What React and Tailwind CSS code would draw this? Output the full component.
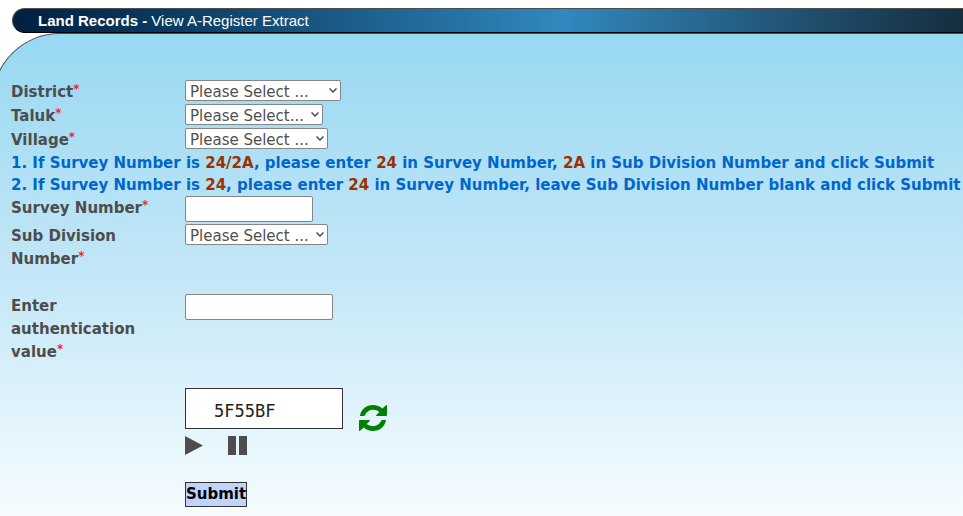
import React from 'react';

const controlClass = 'border border-[#858585] rounded-xs bg-white text-[#505050]';

const Required = () => <span className="text-[#ff1f1f] text-xs leading-4 align-top">*</span>;

const FormRow = ({ id, label, className = '', children }) => (
  <div className={`flex items-start ${className}`}>
    <label htmlFor={id} className="w-36 mr-[30px] pt-px shrink-0 font-bold leading-[23px]">
      {label}
      <Required />
    </label>
    {children}
  </div>
);

const SelectField = ({ id, placeholder, width }) => (
  <div className={`relative ${width}`}>
    <select
      id={id}
      name={id}
      defaultValue=""
      className={`${controlClass} block w-full h-[21px] leading-[19px] pt-0.5 pl-1 pr-4 appearance-none`}
    >
      <option value="">{placeholder}</option>
    </select>
    <svg
      viewBox="0 0 8 5"
      fill="none"
      stroke="currentColor"
      strokeWidth="1.5"
      className="absolute right-1 top-2 w-2 h-[5px] pointer-events-none"
      aria-hidden="true"
    >
      <path d="M.5.5 4 4 7.500.5" />
    </svg>
  </div>
);

const Mark = ({ children }) => <span className="text-[#993300]">{children}</span>;

const RefreshIcon = () => (
  <svg viewBox="0 0 28 28" fill="currentColor" className="w-7 h-7" aria-hidden="true">
    <path d="M1 11.500C2.500 4.800 7.500 1 14 1c3.600 0 6.800 1.300 9.300 3.500L27 1.200q1-.6 1 .6V11q0 1-1 1H17.800q-1.200 0-.5-1l3-3C18.500 6.600 16.500 5.800 14 5.800c-3.600 0-6.500 2-8 5.200q-.3 1-1 1H1.500q-.6 0-.5-.5z" />
    <path d="M27 16.500C25.500 23.200 20.500 27 14 27c-3.600 0-6.800-1.300-9.300-3.500L1 26.800q-1 .6-1-.6V17q0-1 1-1h9.200q1.200 0 .5 1l-3 3c1.800 1.400 3.800 2.200 6.300 2.200 3.600 0 6.500-2 8-5.200q.3-1 1-1h3.500q.6 0 .5.5z" />
  </svg>
);

const PlayIcon = () => (
  <svg viewBox="0 0 18 20" fill="currentColor" className="w-[18px] h-5" aria-hidden="true">
    <path d="M0 0 18 9.500 0 19z" />
  </svg>
);

const PauseIcon = () => (
  <svg viewBox="0 0 20 20" fill="currentColor" className="w-5 h-5" aria-hidden="true">
    <path d="M1 0h8v19H1zM12 0h8v19h-8z" />
  </svg>
);

const App = () => {
  return (
    <div className="min-h-screen overflow-hidden bg-white pt-2 flex flex-col">
      <header className="ml-3 h-[25px] pt-px flex items-center rounded-l-full border border-r-0 border-[#4d4d4d] border-b-black bg-linear-to-r from-[#021f3f] via-[#3089c0] via-58% to-[#152e40] pl-[25px] font-['Liberation_Sans',Arial,sans-serif] text-[15px] text-white">
        <h1>
          <strong>Land Records -</strong> View A-Register Extract
        </h1>
      </header>

      <main className="grow -ml-2 rounded-tl-[68px] border-t border-l border-[#4d4d4d] bg-linear-to-b from-[#97d8f2] via-[#c3e7f7] via-50% to-[#f6fcff] pl-[18px] pt-[46px] pb-[9px] font-['DejaVu_Sans',Verdana,sans-serif] text-[15px] text-[#4d4d4d]">
        <form onSubmit={(e) => e.preventDefault()}>
          <FormRow id="district" label="District" className="h-6">
            <SelectField id="district" placeholder="Please Select ..." width="w-[156px]" />
          </FormRow>
          <FormRow id="taluk" label="Taluk" className="h-6">
            <SelectField id="taluk" placeholder="Please Select..." width="w-[138px]" />
          </FormRow>
          <FormRow id="village" label="Village" className="h-6">
            <SelectField id="village" placeholder="Please Select ..." width="w-[143px]" />
          </FormRow>

          {/* Instructions */}
          <div className="font-bold leading-[22px] text-[#0066cc] whitespace-nowrap">
            <p>
              1. If Survey Number is <Mark>24/2A</Mark>, please enter <Mark>24</Mark> in Survey Number, <Mark>2A</Mark> in
              Sub Division Number and click Submit
            </p>
            <p>
              2. If Survey Number is <Mark>24</Mark>, please enter <Mark>24</Mark> in Survey Number, leave Sub Division
              Number blank and click Submit
            </p>
          </div>

          <FormRow id="surveyNumber" label="Survey Number" className="h-7">
            <input id="surveyNumber" name="surveyNumber" type="text" className={`${controlClass} h-[26px] w-32 px-1`} />
          </FormRow>
          <FormRow id="subDivision" label="Sub Division Number">
            <SelectField id="subDivision" placeholder="Please Select ..." width="w-[143px]" />
          </FormRow>
          <FormRow id="captcha" label="Enter authentication value" className="mt-[23px]">
            <input id="captcha" name="captcha" type="text" className={`${controlClass} h-[26px] w-[148px] px-1`} />
          </FormRow>

          {/* Captcha */}
          <div className="ml-[174px] mt-6 flex flex-col items-start">
            <div className="flex items-end gap-4">
              <div className="w-[158px] h-[41px] border border-[#333333] bg-white pl-7 pt-1.5 flex items-center font-['DejaVu_Sans_Mono',monospace] text-[17px] text-[#222222]">
                5F55BF
              </div>
              <button type="button" aria-label="Refresh" className="text-[#008000] -mb-[3px]">
                <RefreshIcon />
              </button>
            </div>
            <div className="mt-[7px] flex gap-6">
              <button type="button" aria-label="Play">
                <PlayIcon />
              </button>
              <button type="button" aria-label="Pause">
                <PauseIcon />
              </button>
            </div>
            <button type="submit" className="mt-[26px] h-[25px] border border-[#333333] bg-[#bfd3fb] font-bold text-black">
              Submit
            </button>
          </div>
        </form>
      </main>
    </div>
  );
};

export default App;
